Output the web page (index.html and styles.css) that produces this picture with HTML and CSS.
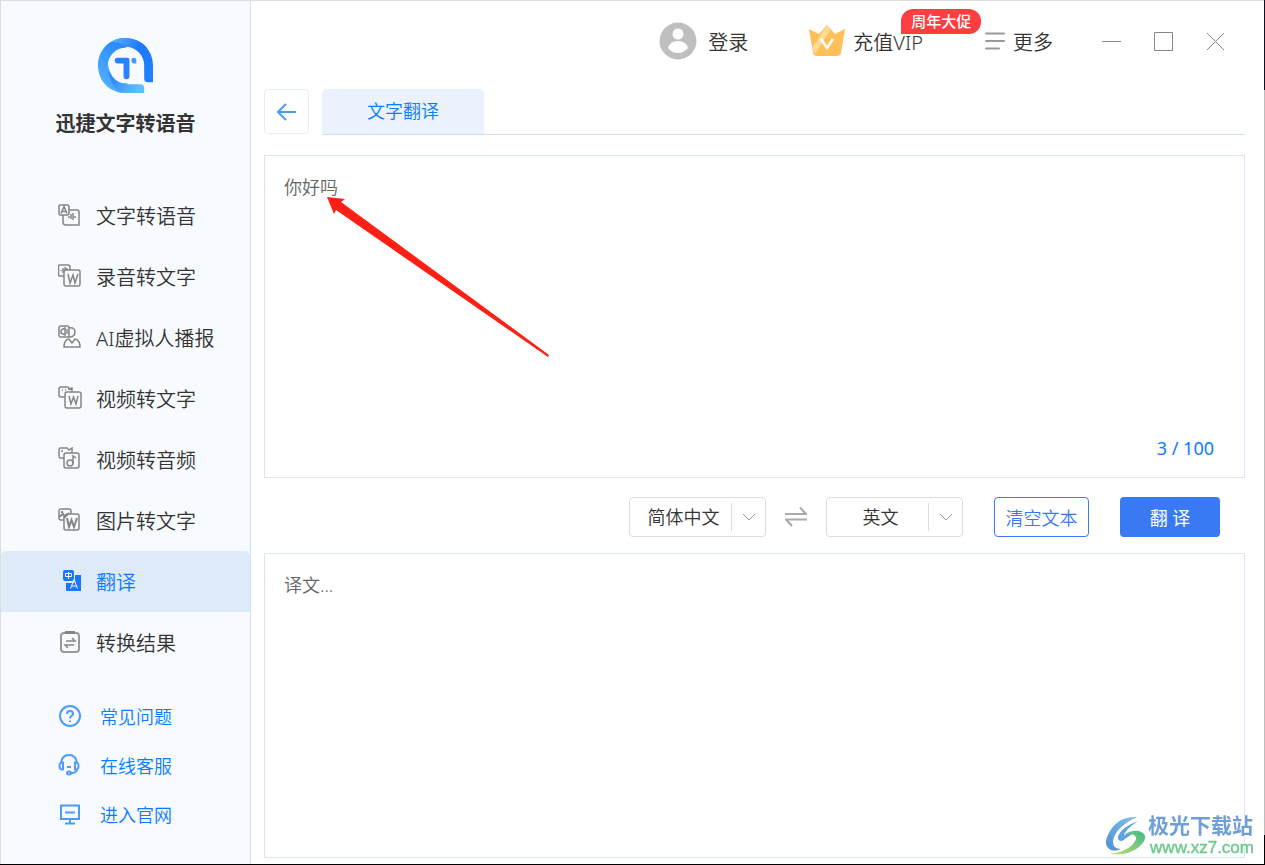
FILE: index.html
```html
<!DOCTYPE html>
<html lang="zh-CN">
<head>
<meta charset="utf-8">
<title>迅捷文字转语音</title>
<link rel="stylesheet" href="styles.css">
</head>
<body>
<div class="window">
  <aside class="sidebar">
    <div class="brand">
      <svg class="brand-logo" viewBox="0 0 56 56" aria-hidden="true">
        <defs>
          <linearGradient id="ringLeft" x1="0" y1="1" x2="0.6" y2="0"><stop offset="0" stop-color="#5db8ff"/><stop offset="1" stop-color="#2184ff"/></linearGradient>
          <linearGradient id="ringTop" x1="0" y1="0" x2="1" y2="0.6"><stop offset="0" stop-color="#58b2ff"/><stop offset="0.6" stop-color="#1c78fb"/><stop offset="1" stop-color="#2080ff"/></linearGradient>
          <linearGradient id="ringTail" x1="0" y1="0" x2="1" y2="0.5"><stop offset="0" stop-color="#1c78fb"/><stop offset="1" stop-color="#60bbff"/></linearGradient>
        </defs>
        <path d="M28 0C12 0 0 12 0 28c0 15 11 27 26 28L30 46A18 18 0 0 1 10 27A18 18 0 0 1 28 10L36 2Q32 0 28 0Z" fill="url(#ringLeft)"/>
        <path d="M13 4C18 1 23 0 28 0c16 0 28 12 28 28v17h-5q-4 0-4-4V28A19 19 0 0 0 28 9C25 6 19 4 13 4Z" fill="url(#ringTop)"/>
        <path d="M10 27C12 40 20 47 30 47h13q4 0 4 4v5H28C17 55 11 44 10 27Z" fill="url(#ringTail)"/>
        <path d="M20 20h10q2 0 2 2v17q0 3-3 3t-3-3V26h-6q-3 0-3-3t3-3Z" fill="#2783ff"/>
        <path d="M34 23q0-3 2.500-3t2.500 3v3h-2q-3 0-3-3Z" fill="#3f9bff"/>
      </svg>
      <h1 class="brand-name">迅捷文字转语音</h1>
    </div>
    <nav class="nav">
      <a class="nav-item" href="#tts">
        <svg class="nav-icon" viewBox="0 0 24 24" aria-hidden="true"><path d="M9 12H2Q1 12 1 11V3Q1 2 2 2H9Q11 2 11 4V7H19Q21 7 21 9V22H8Q5 22 5 19V12M11 7V10Q11 12 9 12"/><path d="M3 10.500L6 3.500L9 10.500M4 8.500H8M11 13v2M13 11v5M15 10v7M17 13v2"/></svg>
        文字转语音</a>
      <a class="nav-item" href="#record">
        <svg class="nav-icon" viewBox="0 0 24 24" aria-hidden="true"><path d="M6 12H2Q0.500 12 0.500 10V3Q0.500 1 2 1H10Q12 1 12 3V6M6 8Q6 6 8 6H20Q22 6 22 8V20Q22 22 20 22H8Q6 22 6 20Z"/><path d="M3 6v1M5 4v5M7 3v3M9 4v2M10 10L12 19L15 11L17 19L20 10"/></svg>
        录音转文字</a>
      <a class="nav-item" href="#avatar">
        <svg class="nav-icon" viewBox="0 0 24 24" aria-hidden="true"><path d="M11 12H3Q1 12 1 10V3Q1 1 3 1H9Q11 1 11 3ZM11 3Q17 2 17 7Q17 12 11 12M6 22Q6 15 11 14L14 18L17 14Q22 15 22 22Z"/><path d="M3 5v3L7 10V3L3 5M9 4v5"/></svg>
        AI虚拟人播报</a>
      <a class="nav-item" href="#video-text">
        <svg class="nav-icon" viewBox="0 0 24 24" aria-hidden="true"><path d="M7 11H3Q1 11 1 9V3Q1 1 3 1H9Q11 1 11 3L14 2V6M7 8Q7 6 9 6H21Q23 6 23 8V20Q23 22 21 22H9Q7 22 7 20Z"/><path d="M4 4h1M7 4h1M11 10L13 18L15.500 11L18 18L20 10"/></svg>
        视频转文字</a>
      <a class="nav-item" href="#video-audio">
        <svg class="nav-icon" viewBox="0 0 24 24" aria-hidden="true"><path d="M6 11H2Q1 11 1 9V3Q1 1 2 1H9L11 3L14 1V6M6 8Q6 6 8 6H19Q21 6 21 8V19Q21 21 19 21H8Q6 21 6 19Z"/><path d="M3 4h2M15 16V9L18 11"/><circle cx="12" cy="16" r="3"/></svg>
        视频转音频</a>
      <a class="nav-item" href="#image-text">
        <svg class="nav-icon" viewBox="0 0 24 24" aria-hidden="true"><path d="M6 12H3Q1 12 1 10V3Q1 1 3 1H11Q13 1 13 3V6M6 8L9 6H19Q21 6 21 8V20Q21 22 19 22H8Q6 22 6 20Z"/><path d="M1 9L5 6L7 9L11 5M4 3v2M9 10L11 19L13.500 12L16 19L19 10" stroke-width="2"/></svg>
        图片转文字</a>
      <a class="nav-item nav-item-active" href="#translate" aria-current="page">
        <svg class="nav-icon nav-icon-solid" viewBox="0 0 24 24" aria-hidden="true"><rect x="5" y="1" width="11" height="11" rx="2" fill="#1677ff"/><path d="M17 6h6v16H9q-1 0-1-1v-7h7q2 0 2-2Z" fill="#1677ff"/><path d="M7.500 4.500h6v3h-6ZM10.500 3v7M12.500 19.500L16 10.500L19.500 19.500M14 17h4" stroke="#fff" fill="none"/></svg>
        翻译</a>
      <a class="nav-item" href="#results">
        <svg class="nav-icon" viewBox="0 0 24 24" aria-hidden="true"><rect x="3" y="3" width="18" height="19" rx="3" stroke="#999" stroke-width="2"/><path d="M7 2.500h10" stroke-width="3"/><path d="M8 11h9L14 8M16 15H7l3 3" /></svg>
        转换结果</a>
    </nav>
    <nav class="help">
      <a class="help-item" href="#faq">
        <svg class="help-icon" viewBox="0 0 24 24" aria-hidden="true"><circle cx="12" cy="12" r="10"/><path d="M9 10Q9 7 12 7T15 10Q15 11 13.500 12T12 14.500M12 16.500v1.500"/></svg>
        常见问题</a>
      <a class="help-item" href="#service">
        <svg class="help-icon" viewBox="0 0 24 24" aria-hidden="true"><path d="M3 10Q4 2 11 2T19 10M19 17Q18 20 13 20"/><path d="M5 9.500v7Q1.500 17 1.500 13T5 9.500ZM17 9.500v7Q20.500 17 20.500 13T17 9.500Z"/><path d="M9 14h4"/><ellipse cx="11" cy="20" rx="2" ry="1.500"/></svg>
        在线客服</a>
      <a class="help-item" href="#site">
        <svg class="help-icon" viewBox="0 0 24 24" aria-hidden="true"><path d="M3 3.500H21V17H3ZM7 10.500h10M12 17v4M7 21.500h10"/></svg>
        进入官网</a>
    </nav>
  </aside>

  <main class="main">
    <header class="titlebar">
      <button class="bar-button login" type="button">
        <svg class="avatar" viewBox="0 0 38 38" aria-hidden="true"><circle cx="19" cy="19" r="18.500" fill="#bfbfbf"/><circle cx="19" cy="12" r="5.500" fill="#fff"/><path d="M9 26Q11 19 19 19T29 26Q25 31 19 31T9 26Z" fill="#fff"/></svg>
        登录</button>
      <button class="bar-button vip" type="button">
        <svg class="crown" viewBox="0 0 36 32" aria-hidden="true"><path d="M0 4L10 9L18 0L26 9L36 4L32 28Q31 31 28 31H8Q5 31 4 28Z" fill="#ffc157"/><path d="M18 0L22 4L6 29L3 23Z" fill="#ffd998"/><path d="M12 14L18 23L24 14" fill="none" stroke="#fff" stroke-width="2.500"/></svg>
        充值VIP
        <span class="badge">周年大促</span></button>
      <button class="bar-button more" type="button">
        <svg class="menu-icon" viewBox="0 0 20 20" aria-hidden="true"><path d="M1 2.500H19M1 10H19M1 17.500H14" stroke="#999" stroke-width="2" stroke-linecap="round"/></svg>
        更多</button>
      <div class="window-controls">
        <button class="control" type="button" aria-label="最小化"><svg viewBox="0 0 20 20" aria-hidden="true"><path d="M1 10.500H20"/></svg></button>
        <button class="control" type="button" aria-label="最大化"><svg viewBox="0 0 20 20" aria-hidden="true"><path d="M1.500 1.500H19.500V19.500H1.500Z"/></svg></button>
        <button class="control" type="button" aria-label="关闭"><svg viewBox="0 0 20 20" aria-hidden="true"><path d="M2 2L19 19M19 2L2 19"/></svg></button>
      </div>
    </header>

    <div class="tabs">
      <button class="back" type="button" aria-label="返回"><svg viewBox="0 0 20 20" aria-hidden="true"><path d="M19 10H1M9 2L1 10L9 18"/></svg></button>
      <div class="tab-strip"><button class="tab" type="button">文字翻译</button></div>
    </div>

    <section class="panel panel-source">
      <textarea class="panel-text" aria-label="原文">你好吗</textarea>
      <p class="counter">3 / 100</p>
      <svg class="pointer" viewBox="0 0 222 160" aria-hidden="true"><path d="M0 0L18 2L14 5L222 158L221 160L9 13L7 17Z" fill="#ff2015"/></svg>
    </section>

    <div class="toolbar">
      <div class="languages">
        <div class="picker">
          <select class="picker-select" aria-label="源语言"><option>简体中文</option></select>
          <svg class="chevron" viewBox="0 0 14 8" aria-hidden="true"><path d="M1 1L7 7L13 1"/></svg>
        </div>
        <button class="swap" type="button" aria-label="交换语言"><svg viewBox="0 0 22 22" aria-hidden="true"><path d="M0 8H21L15 1.500M22 13.500H1L7 20"/></svg></button>
        <div class="picker">
          <select class="picker-select" aria-label="目标语言"><option>英文</option></select>
          <svg class="chevron" viewBox="0 0 14 8" aria-hidden="true"><path d="M1 1L7 7L13 1"/></svg>
        </div>
      </div>
      <button class="action action-clear" type="button">清空文本</button>
      <button class="action action-translate" type="button">翻 译</button>
    </div>

    <section class="panel panel-result">
      <textarea class="panel-text" aria-label="译文" placeholder="译文..." readonly></textarea>
    </section>
  </main>
</div>

<div class="watermark">
  <svg class="watermark-logo" viewBox="0 0 42 40" aria-hidden="true">
    <defs>
      <linearGradient id="swirlBlue" x1="0" y1="1" x2="1" y2="0"><stop offset="0" stop-color="#4d8fd6"/><stop offset="1" stop-color="#82c4e8"/></linearGradient>
      <linearGradient id="swirlGreen" x1="0" y1="1" x2="1" y2="0"><stop offset="0" stop-color="#c9dc6a"/><stop offset="1" stop-color="#3fb88a"/></linearGradient>
    </defs>
    <path d="M32 1Q14 0 5 15Q-2 27 3 32Q8 37 16 33Q8 33 8 26Q9 12 32 1Z" fill="url(#swirlBlue)"/>
    <path d="M33 5Q17 11 13 20Q12 25 17 25Q21 22 29 17Q20 17 19 20Q19 14 33 5Z" fill="#5ba3dc"/>
    <path d="M20 18Q31 12 38 17Q44 22 34 31Q23 40 5 38Q20 36 27 29Q34 22 29 19Q25 17 20 18Z" fill="url(#swirlGreen)"/>
  </svg>
  <div class="watermark-words">
    <span class="watermark-name">极光下载站</span>
    <span class="watermark-url">www.xz7.com</span>
  </div>
</div>
</body>
</html>
```
FILE: styles.css
```css
* {
  box-sizing: border-box;
}

body {
  margin: 0;
  min-height: 100vh;
  display: flex;
  padding: 0 1px 1px 0;
  background: linear-gradient(#0c1124 90px, #bcbcbc 90px, #bcbcbc calc(100vh - 30px), #000 calc(100vh - 30px));
  font-family: "Noto Sans", "Noto Sans CJK SC", sans-serif;
  font-weight: 350;
  color: #333;
}

button,
select,
textarea {
  font: inherit;
  color: inherit;
}

button {
  padding: 0;
  border: 0;
  background: none;
  cursor: pointer;
}

svg {
  display: block;
  flex: none;
}

.window {
  flex: 1;
  display: flex;
  border: 1px solid #ddd;
  border-width: 1px 0 0 1px;
  background: #fff;
}

.sidebar {
  width: 250px;
  flex: none;
  display: flex;
  flex-direction: column;
  border-right: 1px solid #cfe0f5;
  background: #f7faff;
}

.brand {
  height: 184px;
  padding-top: 37px;
  display: flex;
  flex-direction: column;
  align-items: center;
  gap: 17px;
}

.brand-logo {
  width: 55px;
  height: 55px;
}

.brand-name {
  margin: 0;
  font-size: 20px;
  line-height: 28px;
  font-weight: 700;
}

.nav-item,
.help-item {
  display: flex;
  align-items: center;
  padding-left: 57px;
  color: inherit;
  text-decoration: none;
}

.nav-item {
  height: 61px;
  padding-bottom: 1px;
  gap: 14px;
  font-size: 20px;
}

.nav-item-active {
  border-radius: 5px 5px 0 0;
  background: #deeaf8;
  color: #0a7cff;
}

.nav-icon {
  width: 24px;
  height: 24px;
  fill: none;
  stroke: #858585;
  stroke-width: 1.5;
}

.nav-icon-solid {
  stroke: none;
  stroke-width: 1;
}

.help {
  margin-top: 18px;
}

.help-item {
  height: 49px;
  gap: 18px;
  font-size: 18px;
  color: #0a7cff;
}

.help-icon {
  width: 24px;
  height: 24px;
  fill: none;
  stroke: #4c9bfb;
  stroke-width: 2;
}

.main {
  flex: 1;
  min-width: 0;
  display: flex;
  flex-direction: column;
  padding: 0 19px 6px 13px;
}

.titlebar {
  height: 88px;
  padding: 0 20px 8px 0;
  display: flex;
  align-items: center;
  justify-content: flex-end;
  font-size: 20px;
}

.bar-button {
  position: relative;
  display: flex;
  align-items: center;
}

.login {
  gap: 11px;
  margin-right: 61px;
}

.avatar {
  width: 38px;
  height: 38px;
}

.vip {
  gap: 8px;
  margin-right: 62px;
}

.crown {
  width: 36px;
  height: 32px;
}

.badge {
  position: absolute;
  left: 92px;
  bottom: 23px;
  width: 80px;
  height: 25px;
  border-radius: 12px 12px 12px 0;
  background: #ff3e41;
  color: #fff;
  font-size: 15px;
  line-height: 25px;
  font-weight: 500;
}

.more {
  gap: 8px;
  margin-right: 48px;
}

.menu-icon {
  width: 20px;
  height: 20px;
}

.window-controls {
  display: flex;
  gap: 32px;
}

.control {
  width: 20px;
  height: 20px;
}

.control svg {
  fill: none;
  stroke: #888;
}

.tabs {
  display: flex;
  gap: 13px;
  height: 46px;
  margin-bottom: 20px;
}

.back {
  width: 45px;
  height: 45px;
  display: grid;
  place-items: center;
  border: 1px solid #e3eefd;
  border-radius: 4px;
}

.back svg {
  width: 20px;
  height: 20px;
  fill: none;
  stroke: #4c9bfb;
  stroke-width: 2;
}

.tab-strip {
  flex: 1;
  display: flex;
  border-bottom: 1px solid #cfe0f5;
}

.tab {
  width: 162px;
  padding-bottom: 3px;
  border-radius: 5px 5px 0 0;
  background: #ebf2fe;
  color: #0a7cff;
  font-size: 18px;
}

.panel {
  position: relative;
  display: flex;
  flex-direction: column;
  border: 1px solid #d9e5f6;
}

.panel-source {
  flex: 323 1 0;
}

.panel-result {
  flex: 305 1 0;
}

.panel-text {
  flex: 1;
  padding: 18px 19px 0;
  border: 0;
  outline: 0;
  resize: none;
  background: none;
  color: #666;
  font-size: 18px;
  line-height: 26px;
}

.panel-text::placeholder {
  color: #666;
  opacity: 1;
}

.counter {
  margin: 0;
  padding: 0 30px 15px;
  text-align: right;
  font-size: 18px;
  line-height: 28px;
  font-weight: 400;
  color: #0a7cff;
}

.pointer {
  position: absolute;
  left: 62px;
  top: 41px;
  width: 222px;
  height: 160px;
  pointer-events: none;
}

.toolbar {
  height: 75px;
  padding: 4px 25px 0 0;
  display: flex;
  align-items: center;
  justify-content: flex-end;
  gap: 31px;
  font-size: 18px;
}

.languages {
  display: flex;
  align-items: center;
  gap: 19px;
}

.picker {
  position: relative;
  width: 137px;
  height: 40px;
  border: 1px solid #ddd;
  border-radius: 4px;
}

.picker::after {
  content: "";
  position: absolute;
  right: 33px;
  top: 5px;
  bottom: 5px;
  border-left: 1px solid #ddd;
}

.picker-select {
  width: 100%;
  height: 100%;
  padding: 0 34px 0 6px;
  border: 0;
  outline: 0;
  appearance: none;
  background: none;
  text-align: center;
  text-align-last: center;
}

.chevron {
  position: absolute;
  right: 9px;
  top: 15px;
  width: 14px;
  height: 8px;
  fill: none;
  stroke: #999;
  pointer-events: none;
}

.swap svg {
  width: 22px;
  height: 22px;
  fill: none;
  stroke: #aaa;
  stroke-width: 2;
}

.action {
  height: 40px;
  border-radius: 4px;
}

.action-clear {
  width: 95px;
  border: 1px solid #3a7bf2;
  color: #3a7bf2;
}

.action-translate {
  width: 100px;
  background: #397af3;
  color: #fff;
  font-weight: 400;
}

.watermark {
  position: fixed;
  right: 11px;
  bottom: 8px;
  display: flex;
  align-items: center;
  gap: 1px;
  pointer-events: none;
}

.watermark-logo {
  width: 42px;
  height: 40px;
}

.watermark-words {
  display: flex;
  flex-direction: column;
  font-family: "Liberation Sans", "Noto Sans CJK SC", sans-serif;
  font-weight: 700;
  text-shadow: 0 0 2px #fff, 0 0 2px #fff;
}

.watermark-name {
  font-size: 21px;
  line-height: 24px;
  color: #6f9fd8;
}

.watermark-url {
  padding-left: 2px;
  font-size: 17px;
  line-height: 19px;
  font-weight: 400;
  color: #6cc98a;
  -webkit-text-stroke: 0.4px #6cc98a;
}
```
